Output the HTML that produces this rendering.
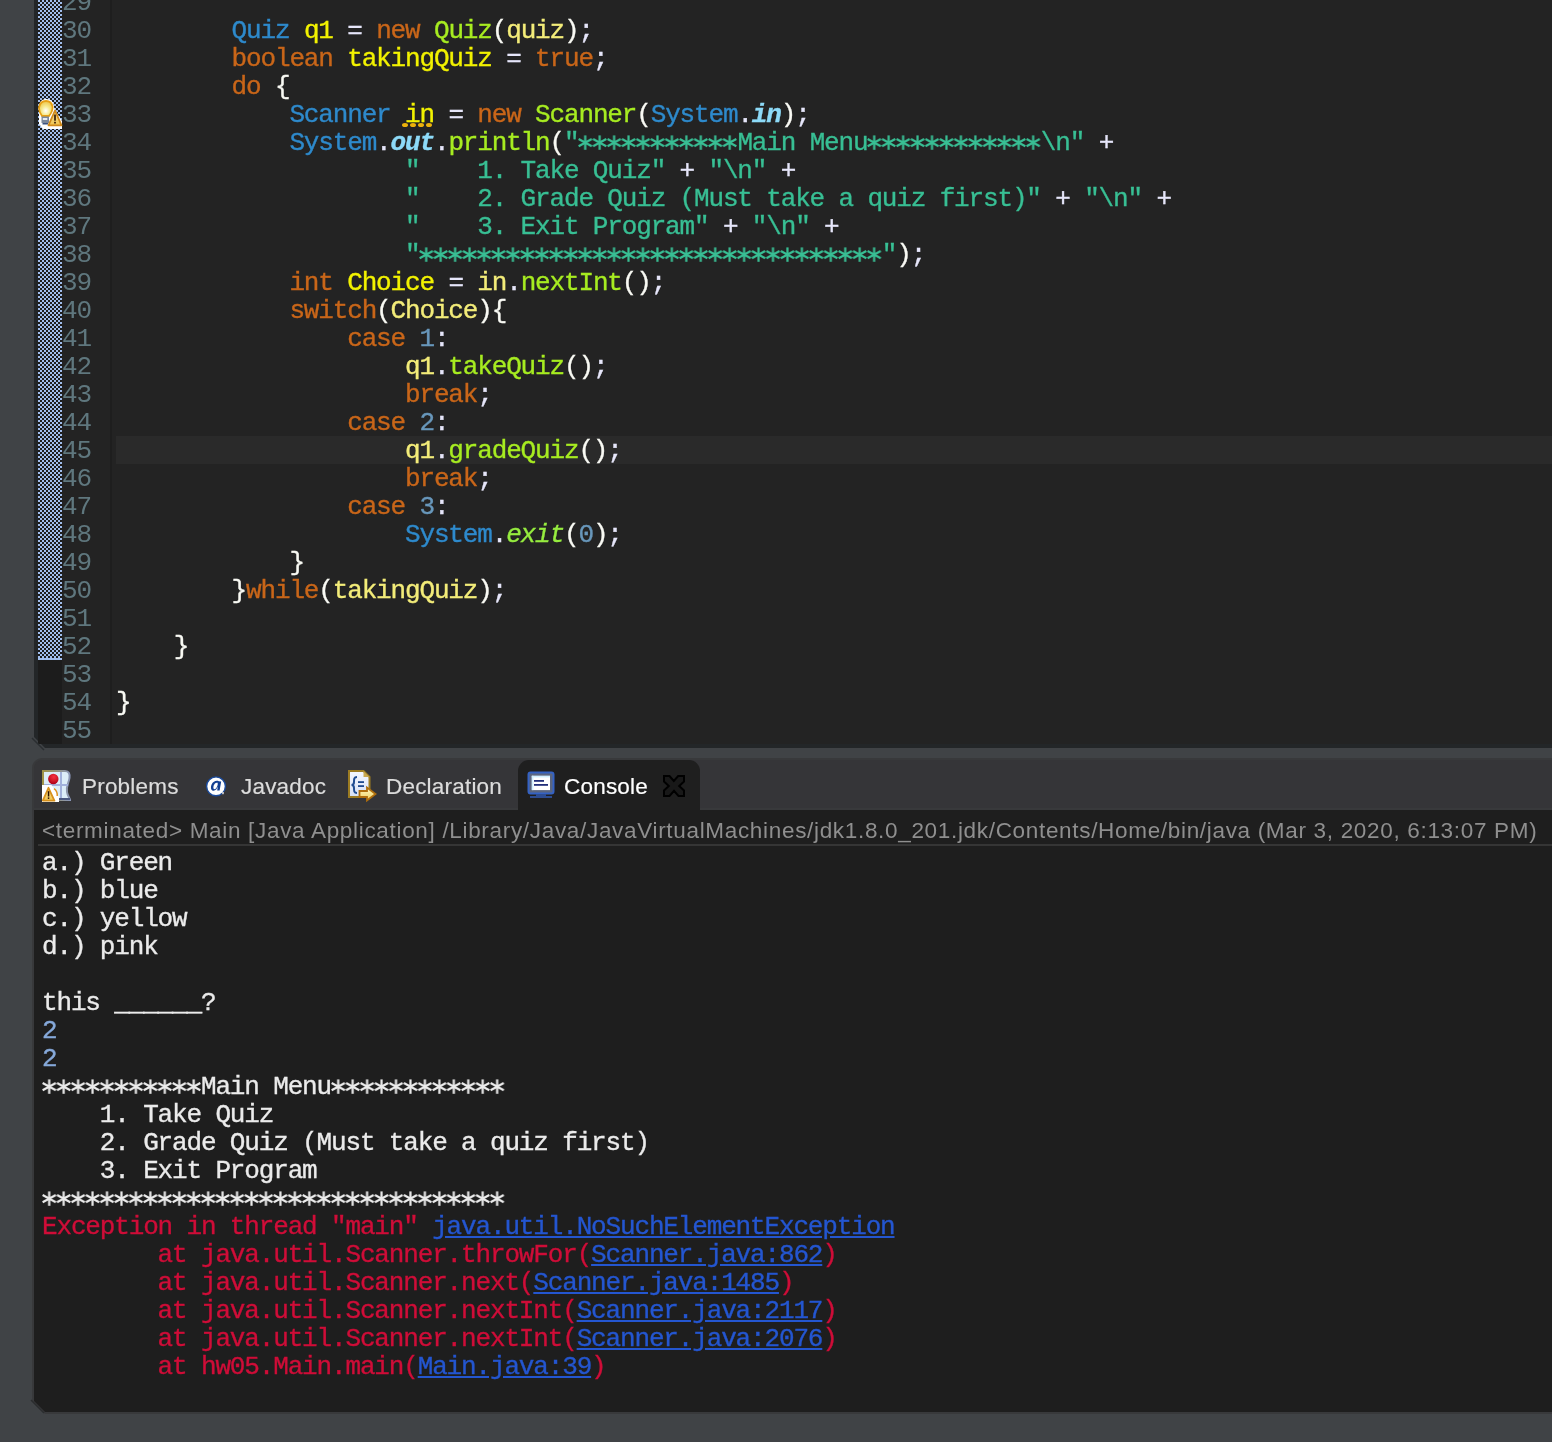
<!DOCTYPE html>
<html><head><meta charset="utf-8">
<style>
*{margin:0;padding:0;box-sizing:border-box}
html,body{width:1552px;height:1442px;overflow:hidden;background:#404346}
body{position:relative;font-family:"Liberation Mono",monospace}
.abs{position:absolute;display:block}
#frame{left:34px;top:-10px;width:1530px;height:758px;background:#232628;clip-path:polygon(0 0,100% 0,100% 100%,11px 100%,0 calc(100% - 11px))}
#ruler{left:38px;top:0;width:24px;height:744px;background:#1c1c1c}
#gutter{left:62px;top:0;width:48px;height:744px;background:#232323}
#sep{left:110px;top:0;width:2px;height:744px;background:#1e1e1e}
#editor{left:112px;top:0;width:1440px;height:744px;background:#232323}
#curline{left:116px;top:436px;width:1436px;height:28px;background:#2a2a2a}
.ln,.cl,.co,.tab,#hdr{will-change:transform}
.ln,.cl,.co{position:absolute;height:28px;line-height:28px;font-size:26px;letter-spacing:-1.153px;white-space:pre;-webkit-text-stroke-width:0.35px}
.ln{left:62px;color:#5f777e;-webkit-text-stroke-width:0}
.cl{left:116px;color:#d9e8f7}
.k{color:#c96619}.c{color:#2e8acc}.v{color:#f2f200}.r{color:#f3ec79}.m{color:#a7ec21}
.o{color:#e6e6fa}.b{color:#f9faf4}.s{color:#38bf94}.n{color:#6897bb}
.sf{color:#8ddaf8;font-style:italic;font-weight:bold}.sm{color:#96ec3f;font-style:italic}
#cpanel{left:32px;top:758px;width:1530px;height:656px;background:#38393b;border-radius:10px 0 0 0;clip-path:polygon(0 0,100% 0,100% 100%,13px 100%,0 calc(100% - 13px))}
#cbody{left:34px;top:810px;width:1530px;height:602px;background:#1e1e1e;clip-path:polygon(0 0,100% 0,100% 100%,11px 100%,0 calc(100% - 11px))}
#tabbar{left:34px;top:760px;width:1530px;height:48px;background:#353538;border-radius:8px 0 0 0}
#acttab{left:518px;top:760px;width:182px;height:50px;background:#1f1f1f;border-radius:11px 11px 0 0}
#cline{left:38px;top:844px;width:1520px;height:2px;background:#353535}
.tab{-webkit-text-stroke-width:0.2px;position:absolute;top:772px;font-family:"Liberation Sans",sans-serif;font-size:22.5px;letter-spacing:0.2px;color:#dcdcdc;line-height:30px;white-space:pre}
#hdr{position:absolute;left:42px;top:816px;font-family:"Liberation Sans",sans-serif;font-size:22.5px;letter-spacing:0.68px;color:#8f8f8f;line-height:30px;white-space:pre}
.co{left:42px;color:#ebebeb}
.in{color:#86a9da}.er{color:#cf0d38}.lk{color:#2456d0;text-decoration:underline}
</style></head><body>
<svg width="0" height="0" style="position:absolute"><defs><pattern id="p_s" patternUnits="userSpaceOnUse" x="0" y="0" width="14.449" height="18"><g stroke="#38bf94" stroke-width="2.2" stroke-linecap="butt"><line x1="7.22" y1="1.40" x2="7.22" y2="15.80"/><line x1="0.62" y1="5.00" x2="13.82" y2="12.20"/><line x1="0.62" y1="12.20" x2="13.82" y2="5.00"/></g></pattern><pattern id="p_w" patternUnits="userSpaceOnUse" x="0" y="0" width="14.449" height="18"><g stroke="#ebebeb" stroke-width="2.2" stroke-linecap="butt"><line x1="7.22" y1="1.40" x2="7.22" y2="15.80"/><line x1="0.62" y1="5.00" x2="13.82" y2="12.20"/><line x1="0.62" y1="12.20" x2="13.82" y2="5.00"/></g></pattern><pattern id="chk" patternUnits="userSpaceOnUse" x="0" y="0" width="4" height="4"><rect width="4" height="4" fill="#1c1c1c"/><rect x="0" y="0" width="2" height="2" fill="#a0bdec"/><rect x="2" y="2" width="2" height="2" fill="#a0bdec"/></pattern></defs></svg>
<div class="abs" id="frame"></div>
<div class="abs" id="ruler"></div>
<svg class="abs" style="left:30px;top:736px" width="20" height="16"><line x1="2" y1="2" x2="14" y2="14" stroke="#2a2e31" stroke-width="1.5"/></svg>
<svg class="abs" style="left:38px;top:0" width="24" height="660"><rect width="24" height="660" fill="url(#chk)"/><rect y="658" width="24" height="2" fill="#a0bdec"/></svg>
<div class="abs" id="gutter"></div>
<div class="abs" id="editor"></div>
<div class="abs" id="sep"></div>
<div class="abs" id="curline"></div>
<!-- quick fix / warning icon line 33 -->
<svg class="abs" style="left:38px;top:99px" width="25" height="31" viewBox="0 0 25 31">
 <path d="M1,8 C1,2 5,0 8,0 C13,0 16,3 16,8 L17,11 L24,22 L24,30 L5,30 L1,25 Z" fill="#ffffff"/>
 <defs><radialGradient id="bulbg" cx="0.5" cy="0.65" r="0.6"><stop offset="0" stop-color="#ffffff"/><stop offset="0.5" stop-color="#f6ea90"/><stop offset="1" stop-color="#eec850"/></radialGradient>
 <linearGradient id="warng" x1="0" y1="0" x2="0" y2="1"><stop offset="0" stop-color="#f7e49a"/><stop offset="1" stop-color="#efc450"/></linearGradient></defs>
 <path d="M4,17 C1,13 0.8,10 1.2,8 C2,3.5 5,2 8,2 C11,2 14,3.5 14.5,8 C14.8,10 14,13 11,17 Z" fill="url(#bulbg)" stroke="#e6a015" stroke-width="1.8"/>
 <rect x="3.5" y="17.5" width="7.5" height="6.5" fill="#7a879c"/>
 <rect x="4.8" y="19" width="4.5" height="2" fill="#e8ecf2"/>
 <rect x="4.5" y="24" width="5.5" height="1.5" fill="#3a5280"/>
 <path d="M17,11.5 L23.5,26.3 L10.5,26.3 Z" fill="url(#warng)" stroke="#d0891a" stroke-width="1.8" stroke-linejoin="round"/>
 <rect x="16.2" y="15.5" width="1.6" height="6.2" fill="#2a1000"/>
 <rect x="16.2" y="22.8" width="1.6" height="1.7" fill="#2a1000"/>
</svg>
<!-- dotted warning underline under "in" line 33 -->
<svg class="abs" style="left:402px;top:122px" width="32" height="6"><g fill="#ecb20c"><ellipse cx="3" cy="3" rx="3" ry="2"/><ellipse cx="11" cy="3" rx="3" ry="2"/><ellipse cx="19" cy="3" rx="3" ry="2"/><ellipse cx="27" cy="3" rx="3" ry="2"/></g></svg>
<div class="abs" id="cpanel"></div>
<div class="abs" id="tabbar"></div>
<div class="abs" id="acttab"></div>
<div class="abs" id="cbody"></div>
<svg class="abs" style="left:29px;top:1398px" width="20" height="18"><line x1="2" y1="2" x2="15" y2="15" stroke="#2a2c2e" stroke-width="1.5"/></svg>
<div class="abs" id="cline"></div>
<div class="ln" style="top:-11px">29</div>
<div class="ln" style="top:17px">30</div>
<div class="cl" style="top:17px">        <span class="c">Quiz</span> <span class="v">q1</span> <span class="o">=</span> <span class="k">new</span> <span class="m">Quiz</span><span class="b">(</span><span class="r">quiz</span><span class="b">)</span><span class="o">;</span></div>
<div class="ln" style="top:45px">31</div>
<div class="cl" style="top:45px">        <span class="k">boolean</span> <span class="v">takingQuiz</span> <span class="o">=</span> <span class="k">true</span><span class="o">;</span></div>
<div class="ln" style="top:73px">32</div>
<div class="cl" style="top:73px">        <span class="k">do</span> <span class="b">{</span></div>
<div class="ln" style="top:101px">33</div>
<div class="cl" style="top:101px">            <span class="c">Scanner</span> <span class="v">in</span> <span class="o">=</span> <span class="k">new</span> <span class="m">Scanner</span><span class="b">(</span><span class="c">System</span><span class="o">.</span><span class="sf">in</span><span class="b">)</span><span class="o">;</span></div>
<div class="ln" style="top:129px">34</div>
<div class="cl" style="top:129px">            <span class="c">System</span><span class="o">.</span><span class="sf">out</span><span class="o">.</span><span class="m">println</span><span class="b">(</span><span class="s">&quot;           Main Menu            \n&quot;</span> <span class="o">+</span></div>
<div class="ln" style="top:157px">35</div>
<div class="cl" style="top:157px">                    <span class="s">&quot;    1. Take Quiz&quot;</span> <span class="o">+</span> <span class="s">&quot;\n&quot;</span> <span class="o">+</span></div>
<div class="ln" style="top:185px">36</div>
<div class="cl" style="top:185px">                    <span class="s">&quot;    2. Grade Quiz (Must take a quiz first)&quot;</span> <span class="o">+</span> <span class="s">&quot;\n&quot;</span> <span class="o">+</span></div>
<div class="ln" style="top:213px">37</div>
<div class="cl" style="top:213px">                    <span class="s">&quot;    3. Exit Program&quot;</span> <span class="o">+</span> <span class="s">&quot;\n&quot;</span> <span class="o">+</span></div>
<div class="ln" style="top:241px">38</div>
<div class="cl" style="top:241px">                    <span class="s">&quot;                                &quot;</span><span class="b">)</span><span class="o">;</span></div>
<div class="ln" style="top:269px">39</div>
<div class="cl" style="top:269px">            <span class="k">int</span> <span class="v">Choice</span> <span class="o">=</span> <span class="r">in</span><span class="o">.</span><span class="m">nextInt</span><span class="b">()</span><span class="o">;</span></div>
<div class="ln" style="top:297px">40</div>
<div class="cl" style="top:297px">            <span class="k">switch</span><span class="b">(</span><span class="r">Choice</span><span class="b">)</span><span class="b">{</span></div>
<div class="ln" style="top:325px">41</div>
<div class="cl" style="top:325px">                <span class="k">case</span> <span class="n">1</span><span class="o">:</span></div>
<div class="ln" style="top:353px">42</div>
<div class="cl" style="top:353px">                    <span class="r">q1</span><span class="o">.</span><span class="m">takeQuiz</span><span class="b">()</span><span class="o">;</span></div>
<div class="ln" style="top:381px">43</div>
<div class="cl" style="top:381px">                    <span class="k">break</span><span class="o">;</span></div>
<div class="ln" style="top:409px">44</div>
<div class="cl" style="top:409px">                <span class="k">case</span> <span class="n">2</span><span class="o">:</span></div>
<div class="ln" style="top:437px">45</div>
<div class="cl" style="top:437px">                    <span class="r">q1</span><span class="o">.</span><span class="m">gradeQuiz</span><span class="b">()</span><span class="o">;</span></div>
<div class="ln" style="top:465px">46</div>
<div class="cl" style="top:465px">                    <span class="k">break</span><span class="o">;</span></div>
<div class="ln" style="top:493px">47</div>
<div class="cl" style="top:493px">                <span class="k">case</span> <span class="n">3</span><span class="o">:</span></div>
<div class="ln" style="top:521px">48</div>
<div class="cl" style="top:521px">                    <span class="c">System</span><span class="o">.</span><span class="sm">exit</span><span class="b">(</span><span class="n">0</span><span class="b">)</span><span class="o">;</span></div>
<div class="ln" style="top:549px">49</div>
<div class="cl" style="top:549px">            <span class="b">}</span></div>
<div class="ln" style="top:577px">50</div>
<div class="cl" style="top:577px">        <span class="b">}</span><span class="k">while</span><span class="b">(</span><span class="r">takingQuiz</span><span class="b">)</span><span class="o">;</span></div>
<div class="ln" style="top:605px">51</div>
<div class="ln" style="top:633px">52</div>
<div class="cl" style="top:633px">    <span class="b">}</span></div>
<div class="ln" style="top:661px">53</div>
<div class="ln" style="top:689px">54</div>
<div class="cl" style="top:689px"><span class="b">}</span></div>
<div class="ln" style="top:717px">55</div>
<div class="co" style="top:849px">a.) Green</div>
<div class="co" style="top:877px">b.) blue</div>
<div class="co" style="top:905px">c.) yellow</div>
<div class="co" style="top:933px">d.) pink</div>
<div class="co" style="top:989px">this ______?</div>
<div class="co" style="top:1017px"><span class="in">2</span></div>
<div class="co" style="top:1045px"><span class="in">2</span></div>
<div class="co" style="top:1073px">           Main Menu            </div>
<div class="co" style="top:1101px">    1. Take Quiz</div>
<div class="co" style="top:1129px">    2. Grade Quiz (Must take a quiz first)</div>
<div class="co" style="top:1157px">    3. Exit Program</div>
<div class="co" style="top:1185px">                                </div>
<div class="co" style="top:1213px"><span class="er">Exception in thread &quot;main&quot; </span><span class="lk">java.util.NoSuchElementException</span></div>
<div class="co" style="top:1241px"><span class="er">        at java.util.Scanner.throwFor(</span><span class="lk">Scanner.java:862</span><span class="er">)</span></div>
<div class="co" style="top:1269px"><span class="er">        at java.util.Scanner.next(</span><span class="lk">Scanner.java:1485</span><span class="er">)</span></div>
<div class="co" style="top:1297px"><span class="er">        at java.util.Scanner.nextInt(</span><span class="lk">Scanner.java:2117</span><span class="er">)</span></div>
<div class="co" style="top:1325px"><span class="er">        at java.util.Scanner.nextInt(</span><span class="lk">Scanner.java:2076</span><span class="er">)</span></div>
<div class="co" style="top:1353px"><span class="er">        at hw05.Main.main(</span><span class="lk">Main.java:39</span><span class="er">)</span></div>
<svg class="abs" style="left:578.37px;top:134px" width="159.94" height="18"><rect x="0" y="0" width="158.94" height="18" fill="url(#p_s)"/></svg>
<svg class="abs" style="left:867.35px;top:134px" width="174.39" height="18"><rect x="0" y="0" width="173.39" height="18" fill="url(#p_s)"/></svg>
<svg class="abs" style="left:419.43px;top:246px" width="463.37" height="18"><rect x="0" y="0" width="462.37" height="18" fill="url(#p_s)"/></svg>
<svg class="abs" style="left:42.00px;top:1078px" width="159.94" height="18"><rect x="0" y="0" width="158.94" height="18" fill="url(#p_w)"/></svg>
<svg class="abs" style="left:330.98px;top:1078px" width="174.39" height="18"><rect x="0" y="0" width="173.39" height="18" fill="url(#p_w)"/></svg>
<svg class="abs" style="left:42.00px;top:1190px" width="463.37" height="18"><rect x="0" y="0" width="462.37" height="18" fill="url(#p_w)"/></svg>
<!-- Problems icon -->
<svg class="abs" style="left:42px;top:770px" width="32" height="34" viewBox="0 0 32 34">
 <defs><linearGradient id="pbord" x1="0" y1="0" x2="1" y2="0"><stop offset="0" stop-color="#a09448"/><stop offset="1" stop-color="#8a96b8"/></linearGradient>
 <radialGradient id="redg" cx="0.55" cy="0.3" r="0.65"><stop offset="0" stop-color="#f83040"/><stop offset="0.6" stop-color="#d01828"/><stop offset="1" stop-color="#b0001a"/></radialGradient></defs>
 <path d="M1,1 L23,1 C27,1 28,4 27.5,8 C27,12 24,16 25,22 C25.5,26 28,28 28,30 L1,30 Z" fill="#dcedf9" stroke="url(#pbord)" stroke-width="2"/>
 <rect x="18" y="2" width="2" height="27" fill="#a2b1dc"/>
 <rect x="2" y="14" width="24" height="2" fill="#a2b1dc"/>
 <rect x="17" y="28" width="11" height="2" fill="#4c5a82"/>
 <circle cx="11.3" cy="9" r="5.2" fill="url(#redg)"/>
 <path d="M0,15 L9.5,15 L17,27 L17,32 L0,32 Z" fill="#ffffff"/>
 <path d="M6.5,17.8 L12.4,30.6 L0.8,30.6 Z" fill="url(#warng)" stroke="#d8911c" stroke-width="1.8" stroke-linejoin="round"/>
 <rect x="5.8" y="21.2" width="1.5" height="5.3" fill="#2a1000"/>
 <rect x="5.8" y="27.4" width="1.5" height="1.5" fill="#2a1000"/>
 <path d="M12,18.6 C14,20 15.5,23 15.2,26" fill="none" stroke="#e0901c" stroke-width="1.4"/>
</svg>
<!-- Javadoc @ icon -->
<svg class="abs" style="left:205px;top:776px" width="22" height="21" viewBox="0 0 22 21">
 <circle cx="11" cy="10.3" r="9.4" fill="#ffffff" stroke="#1a4a9c" stroke-width="1.4"/>
 <rect x="17.2" y="16" width="1.6" height="2.2" fill="#d8d8d8"/>
 <path d="M13.8,5.2 C11.5,4.2 8.2,5 6.6,8.5 C5.2,11.8 6.2,14.8 8.6,14.8 C10.6,14.8 12,12.8 12.8,10.6 L12.2,14.6 L14.6,14.6 L16.2,5.4 Z" fill="#123f92"/>
 <path d="M12.7,6.8 C11,6.2 9.4,7.4 8.7,9.4 C8,11.6 8.4,13.2 9.6,13.2 C11,13.2 12.2,11 12.7,8.8 Z" fill="#ffffff"/>
</svg>
<!-- Declaration icon -->
<svg class="abs" style="left:347px;top:769px" width="32" height="34" viewBox="0 0 32 34">
 <defs><linearGradient id="dpage" x1="0" y1="0" x2="0" y2="1"><stop offset="0" stop-color="#f4f7ff"/><stop offset="1" stop-color="#d6e0f4"/></linearGradient>
 <linearGradient id="darr" x1="0" y1="0" x2="0" y2="1"><stop offset="0" stop-color="#fff8c0"/><stop offset="1" stop-color="#f0d060"/></linearGradient></defs>
 <path d="M2,2 L16.5,2 L22.5,8 L22.5,28 L2,28 Z" fill="url(#dpage)" stroke="#9c7c22" stroke-width="2"/>
 <path d="M16.5,2 L16.5,8 L22.5,8 Z" fill="#c8a850"/>
 <path d="M10,8 C7,8 7,10 7,13 C7,15 6,16 4.5,16 C6,16 7,17 7,19 C7,22 7,24 10,24" fill="none" stroke="#1f4c92" stroke-width="2"/>
 <rect x="11" y="12.2" width="6" height="1.8" fill="#1f4a8e"/>
 <rect x="11" y="16.2" width="6" height="1.8" fill="#1f4a8e"/>
 <path d="M12.5,22 L20,22 L20,18.5 L28.5,25 L20,31.5 L20,28 L12.5,28 Z" fill="url(#darr)" stroke="#b06e0c" stroke-width="1.8" stroke-linejoin="miter"/>
</svg>
<!-- Console icon -->
<svg class="abs" style="left:527px;top:771px" width="28" height="28" viewBox="0 0 28 28">
 <rect x="1.5" y="1.5" width="25" height="21" rx="2" fill="#5a6680" stroke="#3462c4" stroke-width="2"/>
 <rect x="4.8" y="4.8" width="18.2" height="14.3" fill="#ffffff"/>
 <rect x="4.8" y="4.8" width="18.2" height="1.6" fill="#d0f0ff"/>
 <rect x="4.8" y="4.8" width="1.6" height="14.3" fill="#d0f0ff"/>
 <rect x="7" y="9" width="10" height="1.8" fill="#23307a"/>
 <rect x="7" y="13" width="14" height="1.8" fill="#23307a"/>
 <rect x="9" y="23" width="10" height="2" fill="#2c4c92"/>
 <rect x="3" y="25" width="22" height="2" fill="#2c4c92"/>
</svg>
<!-- close X -->
<svg class="abs" style="left:663px;top:775px" width="22" height="22" viewBox="-1 -1 22 22">
 <path d="M0,0 L5.5,0 L9.8,5 L14.2,0 L20,0 L20,5.5 L15.2,10 L20,14.5 L20,20 L14.5,20 L10,14.8 L5.5,20 L0,20 L0,14.5 L4.8,10 L0,5.5 Z" fill="#181818" stroke="#000000" stroke-width="2" stroke-linejoin="miter"/>
</svg>
<div class="tab" style="left:82px">Problems</div>
<div class="tab" style="left:241px">Javadoc</div>
<div class="tab" style="left:386px">Declaration</div>
<div class="tab" style="left:564px;color:#ffffff">Console</div>
<div id="hdr">&lt;terminated&gt; Main [Java Application] /Library/Java/JavaVirtualMachines/jdk1.8.0_201.jdk/Contents/Home/bin/java (Mar 3, 2020, 6:13:07 PM)</div>
</body></html>
